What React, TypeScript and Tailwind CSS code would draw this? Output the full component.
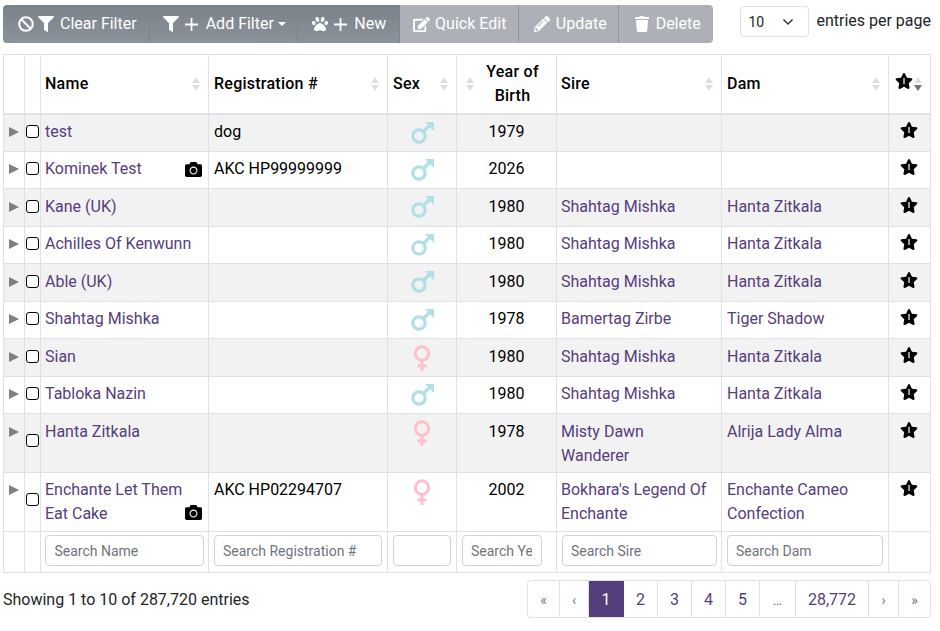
import { FC, ReactNode } from "react";
import { FaBan, FaCamera, FaEdit, FaFilter, FaPaw, FaPencilAlt, FaStar, FaTrash } from "react-icons/fa";

type Row = {
  name: string;
  reg?: string;
  sex: "m" | "f";
  year: number;
  sire?: string;
  dam?: string;
  photo?: boolean;
  tall?: boolean;
};

const rows: Row[] = [
  { name: "test", reg: "dog", sex: "m", year: 1979 },
  { name: "Kominek Test", reg: "AKC HP99999999", sex: "m", year: 2026, photo: true },
  { name: "Kane (UK)", sex: "m", year: 1980, sire: "Shahtag Mishka", dam: "Hanta Zitkala" },
  { name: "Achilles Of Kenwunn", sex: "m", year: 1980, sire: "Shahtag Mishka", dam: "Hanta Zitkala" },
  { name: "Able (UK)", sex: "m", year: 1980, sire: "Shahtag Mishka", dam: "Hanta Zitkala" },
  { name: "Shahtag Mishka", sex: "m", year: 1978, sire: "Bamertag Zirbe", dam: "Tiger Shadow" },
  { name: "Sian", sex: "f", year: 1980, sire: "Shahtag Mishka", dam: "Hanta Zitkala" },
  { name: "Tabloka Nazin", sex: "m", year: 1980, sire: "Shahtag Mishka", dam: "Hanta Zitkala" },
  { name: "Hanta Zitkala", sex: "f", year: 1978, sire: "Misty Dawn Wanderer", dam: "Alrija Lady Alma", tall: true },
  { name: "Enchante Let Them Eat Cake", reg: "AKC HP02294707", sex: "f", year: 2002, sire: "Bokhara's Legend Of Enchante", dam: "Enchante Cameo Confection", photo: true, tall: true },
];

const baseCell = "border border-[#dee2e6] px-[5px] pt-[5.5px] pb-[4.5px] align-top";
const link = "text-[#563d7c]";

const SortArrows: FC<{ active?: boolean; left?: boolean }> = ({ active, left }) => (
  <span className={`absolute top-1/2 flex -translate-y-1/2 flex-col gap-[2px] ${left ? "left-[9px]" : "right-[8px]"}`}>
    <span className="h-0 w-0 border-x-[4px] border-b-[6px] border-x-transparent border-b-[#dcdfe2]" />
    <span className={`h-0 w-0 border-x-[4px] border-t-[6px] border-x-transparent ${active ? "border-t-[#6c757d]" : "border-t-[#dcdfe2]"}`} />
  </span>
);

const Star: FC<{ size: number }> = ({ size }) => (
  <span className="relative inline-flex items-center justify-center text-black">
    <FaStar size={size} />
    <span className="absolute top-1/2 left-1/2 h-[6px] w-[2px] -translate-x-1/2 -translate-y-1/2 bg-[#9a9a9a]" />
  </span>
);

const ThinPlus: FC = () => (
  <svg width="15" height="15" viewBox="0 0 15 15" className="shrink-0">
    <path d="M7.5 1v13M1 7.5h13" stroke="#fff" strokeWidth="1.8" fill="none" />
  </svg>
);

const MarsIcon: FC = () => (
  <svg width="24" height="24" viewBox="0 0 24 24" className="mt-[6px] ml-[18px] block text-[#b0e0e6]">
    <circle cx="8" cy="15" r="6.2" fill="none" stroke="currentColor" strokeWidth="3.2" />
    <path d="M12 11l8-8" fill="none" stroke="currentColor" strokeWidth="3.4" />
    <path d="M14 1h9v9z" fill="currentColor" />
  </svg>
);

const VenusIcon: FC = () => (
  <svg width="24" height="27" viewBox="0 0 24 27" className="mt-[6px] ml-[18px] block text-[#ffc0cb]">
    <circle cx="11" cy="8.5" r="6.7" fill="none" stroke="currentColor" strokeWidth="3" />
    <path d="M11 15v11M6.5 21h9" fill="none" stroke="currentColor" strokeWidth="3" />
  </svg>
);

const ToolButton: FC<{ dim?: boolean; className: string; children: ReactNode }> = ({ dim, className, children }) => (
  <button className={`flex h-full items-center border-r last:border-r-0 ${dim ? "border-r-[#8f969c] bg-[#adb1b7]" : "border-r-[#7d858c] bg-gradient-to-b from-[#7b838a] to-[#8b9299]"} ${className}`}>
    {children}
  </button>
);

const Head: FC<{ label: ReactNode; className?: string; active?: boolean; arrowsLeft?: boolean }> = ({ label, className = "", active, arrowsLeft }) => (
  <th className={`relative border border-b-2 border-[#dee2e6] px-[5px] py-[4.75px] font-medium tracking-[0.25px] text-black ${className}`}>
    {label}
    <SortArrows active={active} left={arrowsLeft} />
  </th>
);

const Toolbar: FC = () => (
  <div className="flex h-[38px] w-[711px] overflow-hidden rounded-[4px] text-white">
    <ToolButton className="w-[147px] pl-[15px]">
      <FaBan size={16} />
      <FaFilter size={16} className="ml-[4px]" />
      <span className="ml-[6px]">Clear Filter</span>
    </ToolButton>
    <ToolButton className="w-[149px] pl-[13px]">
      <FaFilter size={16} />
      <span className="ml-[5px]"><ThinPlus /></span>
      <span className="ml-[7px]">Add Filter</span>
      <span className="ml-[4px] h-0 w-0 border-x-[4px] border-t-[4px] border-x-transparent border-t-white" />
    </ToolButton>
    <ToolButton className="w-[102px] pl-[14px]">
      <FaPaw size={16} />
      <span className="ml-[5px]"><ThinPlus /></span>
      <span className="ml-[6px]">New</span>
    </ToolButton>
    <ToolButton dim className="w-[119px] pl-[13px]">
      <FaEdit size={17} />
      <span className="ml-[5px]">Quick Edit</span>
    </ToolButton>
    <ToolButton dim className="w-[100px] pl-[15px]">
      <FaPencilAlt size={16} />
      <span className="ml-[6px]">Update</span>
    </ToolButton>
    <ToolButton dim className="w-[95px] pl-[15px]">
      <FaTrash size={16} />
      <span className="ml-[6px]">Delete</span>
    </ToolButton>
  </div>
);

const TableRow: FC<{ row: Row; index: number }> = ({ row, index }) => {
  // last row sits half a pixel higher than the others in the reference
  const cell = index === 9 ? `${baseCell} !pt-[5px]` : baseCell;
  return (
    <tr className={`${row.tall ? "h-[59px]" : "h-[37.5px]"} ${index % 2 === 0 ? "bg-[#f2f2f2]" : "bg-white"}`}>
      <td className={`${cell} !px-0`}>
        <span className="ml-[5px] block pt-[7px]">
          <span className="block h-0 w-0 border-y-[5.5px] border-l-[10px] border-y-transparent border-l-[#808080]" />
        </span>
      </td>
      <td className={`${cell} !px-0`}>
        <span className={`ml-[1px] block h-[13px] w-[13px] rounded-[3px] border border-black bg-white ${index === 9 ? "mt-[14.5px]" : row.tall ? "mt-[14px]" : "mt-[5px]"}`} />
      </td>
      <td className={`${cell} ${link} relative !pl-[4px]`}>
        {row.name}
        {row.photo && <FaCamera size={17} className="absolute right-[6px] bottom-[10px] text-black" />}
      </td>
      <td className={`${cell} text-black`}>{row.reg}</td>
      <td className={`${baseCell} !py-0`}>
        {row.sex === "m" ? <MarsIcon /> : <VenusIcon />}
      </td>
      <td className={`${cell} text-center text-black`}>{row.year}</td>
      <td className={`${cell} ${link} !pl-[4px]`}>{row.sire}</td>
      <td className={`${cell} ${link}`}>{row.dam}</td>
      <td className={`${cell} text-center`}>
        <span className="block pt-[1px] pr-[1px] leading-[24px]"><Star size={18} /></span>
      </td>
    </tr>
  );
};

const Search: FC<{ placeholder?: string; className: string }> = ({ placeholder, className }) => (
  <input
    placeholder={placeholder}
    className={`mt-[3px] block h-[31px] rounded-[4px] border border-[#ced4da] bg-white px-[8.5px] text-[14px] text-[#495057] placeholder:text-[#6c757d] ${className}`}
  />
);

const pages: { label: string; w: string; small?: boolean; active?: boolean }[] = [
  { label: "«", w: "w-[32px]", small: true },
  { label: "‹", w: "w-[29px]", small: true },
  { label: "1", w: "w-[35px]", active: true },
  { label: "2", w: "w-[34px]" },
  { label: "3", w: "w-[34px]" },
  { label: "4", w: "w-[34px]" },
  { label: "5", w: "w-[34px]" },
  { label: "…", w: "w-[36px]", small: true },
  { label: "28,772", w: "w-[73px]" },
  { label: "›", w: "w-[30px]", small: true },
  { label: "»", w: "w-[31px]", small: true },
];

const searchCell = "border border-[#dee2e6] pl-[4.5px] align-top";

const App: FC = () => {
  return (
    <div className="h-[631px] w-[940px] overflow-hidden bg-white pt-[5px] pr-[9px] pl-[3px] font-['Roboto',sans-serif] text-[16px] leading-[24px] text-[#212529]">
      <div className="flex items-start">
        <Toolbar />
        <div className="ml-[27px] flex shrink-0 items-start">
          <div className="mt-[1px] flex h-[31px] w-[69px] items-center rounded-[4px] border border-[#dee2e6] pl-[7px] text-[14px] text-[#212529]">
            10
            <svg width="12" height="8" viewBox="0 0 12 8" className="ml-[18px]">
              <path d="M1.5 1.5 6 6l4.5-4.5" fill="none" stroke="#343a40" strokeWidth="1.5" />
            </svg>
          </div>
          <span className="ml-[7px] pt-[1px] text-[16px] leading-[30px] whitespace-nowrap">entries per page</span>
        </div>
      </div>

      <table className="mt-[11px] w-[927px] table-fixed border-collapse">
        <colgroup>
          <col className="w-[21px]" />
          <col className="w-[16px]" />
          <col className="w-[168px]" />
          <col className="w-[179px]" />
          <col className="w-[69px]" />
          <col className="w-[100px]" />
          <col className="w-[165px]" />
          <col className="w-[167px]" />
          <col className="w-[42px]" />
        </colgroup>
        <thead>
          <tr className="h-[57.5px]">
            <th className="border border-b-2 border-[#dee2e6]" />
            <th className="border border-b-2 border-[#dee2e6]" />
            <Head label="Name" className="!pl-[4px] text-left" />
            <Head label="Registration #" className="text-left" />
            <Head label="Sex" className="text-left" />
            <Head label={<>Year of<br />Birth</>} className="!pr-[10px] !pl-[22px] text-center" arrowsLeft />
            <Head label="Sire" className="!pl-[4px] text-left" />
            <Head label="Dam" className="text-left" />
            <Head label={<span className="block pt-[2px] pr-[11px]"><Star size={18} /></span>} className="text-center" active />
          </tr>
        </thead>
        <tbody>
          {rows.map((row, i) => (
            <TableRow key={row.name} row={row} index={i} />
          ))}
          <tr className="h-[41px]">
            <td className="border border-[#dee2e6]" />
            <td className="border border-[#dee2e6]" />
            <td className={`${searchCell} !pl-[4px]`}><Search placeholder="Search Name" className="w-[159px]" /></td>
            <td className={searchCell}><Search placeholder="Search Registration #" className="w-[168px]" /></td>
            <td className={searchCell}><Search className="w-[58px]" /></td>
            <td className={searchCell}><Search placeholder="Search Year of Birth" className="w-[80px]" /></td>
            <td className={searchCell}><Search placeholder="Search Sire" className="w-[155px]" /></td>
            <td className={searchCell}><Search placeholder="Search Dam" className="w-[156px]" /></td>
            <td className="border border-[#dee2e6]" />
          </tr>
        </tbody>
      </table>

      <div className="mt-[7px] flex items-center justify-between">
        <span className="pt-[2px]">Showing 1 to 10 of 287,720 entries</span>
        <div className="flex h-[38px] overflow-hidden rounded-[4px] border border-[#dee2e6]">
          {pages.map((p) => (
            <span
              key={p.label}
              className={`flex items-center justify-center border-r pt-[1px] last:border-r-0 ${p.w} ${p.active ? "border-[#563d7c] bg-[#563d7c] text-white" : p.small ? "border-[#dee2e6] text-[14px] text-[#7a6a9a]" : "border-[#dee2e6] text-[#563d7c]"}`}
            >
              {p.label}
            </span>
          ))}
        </div>
      </div>
    </div>
  );
};

export default App;
